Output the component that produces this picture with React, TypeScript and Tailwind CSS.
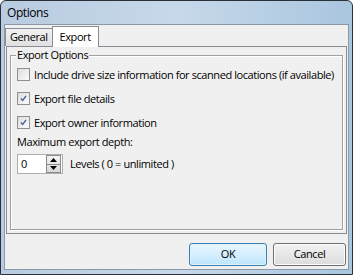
import React from "react";

const font = { fontFamily: '"Open Sans", "Noto Sans", sans-serif', letterSpacing: "-0.42px" };

function CheckBox({ checked }: { checked: boolean }) {
  return (
    <div className="w-[13px] h-[13px] border border-[#8e8f8f] bg-gradient-to-br from-[#dcdcdc] to-[#fbfbfb] p-[2px] shrink-0">
      <div className="w-full h-full bg-gradient-to-br from-[#e4e4e4] to-[#f6f6f6] flex items-center justify-center">
        {checked && (
          <svg width="9" height="9" viewBox="0 0 9 9">
            <path d="M1.2 4.6 L3.4 7 L7.8 1.2" fill="none" stroke="#4a5f97" strokeWidth="1.8" />
          </svg>
        )}
      </div>
    </div>
  );
}

function CheckRow({ checked, label }: { checked: boolean; label: string }) {
  return (
    <div className="flex items-center gap-[4px] h-[16px]">
      <CheckBox checked={checked} />
      <span className="text-[11px] text-black leading-none whitespace-nowrap">{label}</span>
    </div>
  );
}

export default function App() {
  return (
    <div className="w-[353px] h-[275px] overflow-hidden" style={font}>
      <div className="w-full h-full border border-[#2b2f36] rounded-t-[6px] bg-gradient-to-r from-[#b9cbe0] via-[#c7d8ea] to-[#a9c6df] flex flex-col">
        <div className="h-[23px] flex items-center pl-[6px] text-[12px] text-black shrink-0">Options</div>
        <div className="flex-1 mx-[3px] border border-[#8a98a8] bg-[#f0f0f0] flex flex-col">
          {/* tabs */}
          <div className="flex items-end h-[21px] pl-[0px]">
            <div className="h-[18px] px-[4px] border border-[#898c95] border-b-0 bg-gradient-to-b from-[#f2f2f2] to-[#e0e0e0] text-[11px] flex items-center">General</div>
            <div className="h-[21px] px-[7px] border border-[#898c95] border-b-0 -ml-[1px] bg-white text-[11px] flex items-start pt-[2px] relative top-[1px] z-10">Export</div>
          </div>
          <div className="mx-[1px] h-[188px] border border-[#898c95] bg-[#f0f0f0] px-[3px] pt-[8px] pb-[3px]">
            <div className="relative h-full border border-[#a0a0a0] shadow-[inset_1px_1px_0_#ffffff,1px_1px_0_#ffffff]">
              <div className="absolute -top-[9px] left-[5px] px-[1px] bg-[#f0f0f0] text-[11px] leading-[16px]">Export Options</div>
              <div className="pl-[6px] pt-[10px] flex flex-col gap-[8px]">
                <CheckRow checked={false} label="Include drive size information for scanned locations (if available)" />
                <CheckRow checked={true} label="Export file details" />
                <CheckRow checked={true} label="Export owner information" />
              </div>
              <div className="pl-[6px] mt-[4px] text-[11px] leading-[16px]">Maximum export depth:</div>
              <div className="pl-[6px] mt-[4px] flex items-center gap-[7px]">
                <div className="w-[46px] h-[20px] border border-[#abadb3] bg-white flex items-center">
                  <span className="flex-1 pl-[3px] text-[11px]">0</span>
                  <div className="w-[15px] h-[18px] mr-[1px] flex flex-col border border-[#8a8a8a] bg-gradient-to-b from-[#f4f4f4] to-[#d8d8d8]">
                    <div className="flex-1 flex items-center justify-center border-b border-[#8a8a8a]">
                      <svg width="7" height="4" viewBox="0 0 7 4"><path d="M0 4 L3.5 0 L7 4 Z" fill="#000" /></svg>
                    </div>
                    <div className="flex-1 flex items-center justify-center">
                      <svg width="7" height="4" viewBox="0 0 7 4"><path d="M0 0 L3.5 4 L7 0 Z" fill="#000" /></svg>
                    </div>
                  </div>
                </div>
                <span className="text-[11px]">Levels ( 0 = unlimited )</span>
              </div>
            </div>
          </div>
          <div className="flex justify-end gap-[6px] pr-[2px] mt-[9px]">
            <div className="w-[78px] h-[23px] rounded-[3px] border border-[#3c7fb1] bg-gradient-to-b from-[#eaf6fd] to-[#bee6fd] shadow-[inset_0_0_0_1px_#e0f3fd] flex items-center justify-center text-[11px]">OK</div>
            <div className="w-[73px] h-[23px] rounded-[3px] border border-[#707070] bg-gradient-to-b from-[#f2f2f2] to-[#dcdcdc] shadow-[inset_0_0_0_1px_#fcfcfc] flex items-center justify-center text-[11px]">Cancel</div>
          </div>
        </div>
        <div className="h-[4px] shrink-0" />
      </div>
    </div>
  );
}
